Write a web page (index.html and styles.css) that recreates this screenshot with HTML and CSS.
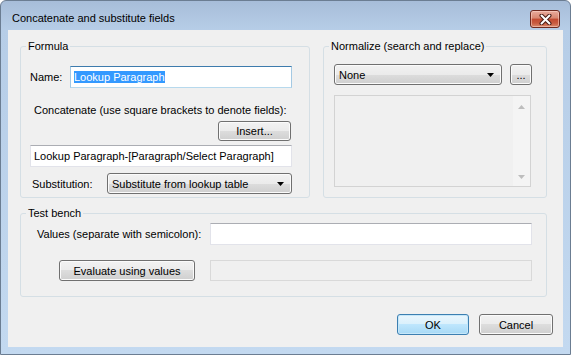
FILE: index.html
```html
<!DOCTYPE html>
<html lang="en">
<head>
    <meta charset="UTF-8">
    <title>Concatenate and substitute fields</title>
    <link rel="stylesheet" href="styles.css">
</head>
<body>
    <div class="window">
        <div class="titlebar">
            <span class="title">Concatenate and substitute fields</span>
            <div class="close-btn">
                <svg width="13" height="11" viewBox="0 0 13 11">
                    <path d="M2.5 1.5 L10.5 9.5 M10.5 1.5 L2.5 9.5" stroke="#4a1c16" stroke-width="4" stroke-linecap="round"/>
                    <path d="M2.5 1.5 L10.5 9.5 M10.5 1.5 L2.5 9.5" stroke="#ffffff" stroke-width="2" stroke-linecap="round"/>
                </svg>
            </div>
        </div>

        <div class="client">
            <div class="top-row">
                <!-- Formula -->
                <fieldset class="group formula">
                    <legend>Formula</legend>
                    <div class="group-body">
                        <div class="name-row">
                            <label class="name-label">Name:</label>
                            <div class="textbox focused"><span class="selected">Lookup Paragraph</span></div>
                        </div>
                        <div class="concat-label">Concatenate (use square brackets to denote fields):</div>
                        <div class="insert-row">
                            <button class="btn insert-btn">Insert...</button>
                        </div>
                        <div class="textbox concat-box">Lookup Paragraph-[Paragraph/Select Paragraph]</div>
                        <div class="subst-row">
                            <label class="subst-label">Substitution:</label>
                            <div class="combo subst-combo">
                                <span>Substitute from lookup table</span>
                                <svg class="arrow" width="7" height="4" viewBox="0 0 7 4"><path d="M0 0 H7 L3.5 4 Z" fill="#000"/></svg>
                            </div>
                        </div>
                    </div>
                </fieldset>

                <!-- Normalize -->
                <fieldset class="group normalize">
                    <legend>Normalize (search and replace)</legend>
                    <div class="group-body">
                        <div class="norm-row">
                            <div class="combo norm-combo">
                                <span>None</span>
                                <svg class="arrow" width="7" height="4" viewBox="0 0 7 4"><path d="M0 0 H7 L3.5 4 Z" fill="#000"/></svg>
                            </div>
                            <button class="btn dots-btn">...</button>
                        </div>
                        <div class="listbox">
                            <div class="scrollbar">
                                <svg width="7" height="4" viewBox="0 0 7 4"><path d="M0 4 H7 L3.5 0 Z" fill="#bdbdbd"/></svg>
                                <svg width="7" height="4" viewBox="0 0 7 4"><path d="M0 0 H7 L3.5 4 Z" fill="#bdbdbd"/></svg>
                            </div>
                        </div>
                    </div>
                </fieldset>
            </div>

            <!-- Test bench -->
            <fieldset class="group testbench">
                <legend>Test bench</legend>
                <div class="group-body">
                    <div class="values-row">
                        <label class="values-label">Values (separate with semicolon):</label>
                        <div class="textbox values-box"></div>
                    </div>
                    <div class="eval-row">
                        <button class="btn eval-btn">Evaluate using values</button>
                        <div class="textbox disabled result-box"></div>
                    </div>
                </div>
            </fieldset>

            <div class="footer">
                <button class="btn default ok-btn">OK</button>
                <button class="btn cancel-btn">Cancel</button>
            </div>
        </div>
    </div>
</body>
</html>
```

FILE: styles.css
```css
* {
    box-sizing: border-box;
}
body {
    margin: 0;
    background: #fff;
    font-family: "Liberation Sans", Arial, sans-serif;
    font-size: 11px;
    color: #000;
}
.window {
    width: 571px;
    height: 355px;
    border: 1px solid #6b7d92;
    border-radius: 6px 6px 0 0;
    background: linear-gradient(#a7bdd9 0px, #b6cde7 28px, #c3d9f0 100%);
}
.titlebar {
    height: 29px;
    display: flex;
    justify-content: space-between;
    align-items: flex-start;
}
.title {
    padding: 11px 0 0 11px;
    line-height: 13px;
}
.close-btn {
    width: 30px;
    height: 18px;
    margin: 9px 10px 0 0;
    border: 1px solid #6e2a20;
    border-radius: 3px;
    background: linear-gradient(#e9ab9d 0%, #d88670 45%, #c24a31 50%, #c85a3f 75%, #d98a6e 100%);
    box-shadow: inset 0 0 0 1px rgba(255, 220, 210, 0.5);
    display: flex;
    align-items: center;
    justify-content: center;
}
.client {
    height: 317px;
    margin: 0 7px;
    padding: 9px 10px 0 12px;
    background: #f0f0f0;
}
.top-row {
    display: flex;
    gap: 13px;
    margin-right: 6px;
}
.group {
    margin: 0;
    padding: 0;
    min-width: 0;
    border: 1px solid #d5dfe5;
    border-radius: 3px;
}
.group legend {
    margin-left: 5px;
    padding: 0 2px;
    line-height: 14px;
}
.formula {
    width: 290px;
}
.formula .group-body {
    padding: 0 17px 3px 9px;
}
.normalize {
    width: 224px;
}
.normalize .group-body {
    padding-left: 10px;
}
.textbox {
    height: 22px;
    padding-left: 3px;
    background: #fff;
    border: 1px solid #e2e3ea;
    border-top-color: #abadb3;
    line-height: 20px;
    white-space: nowrap;
    overflow: hidden;
}
.textbox.focused {
    border-color: #a4c9e3;
    border-top-color: #3d7bad;
    border-bottom-color: #b7d9ed;
}
.textbox.disabled {
    background: #f0f0f0;
    border-color: #d9d9d9;
}
.selected {
    background: #3399ff;
    color: #fff;
}
.btn {
    padding: 0;
    font-family: inherit;
    font-size: 11px;
    color: #000;
    border: 1px solid #707070;
    border-radius: 3px;
    background: linear-gradient(#f2f2f2 0%, #ebebeb 50%, #dddddd 50%, #cfcfcf 100%);
    box-shadow: inset 0 0 0 1px #fbfbfb;
}
.btn.default {
    border-color: #3c7fb1;
    background: linear-gradient(#eaf6fd 0%, #d9f0fc 50%, #bee6fd 50%, #a7d9f5 100%);
    box-shadow: inset 0 0 0 1px #c6e7f9;
}
.combo {
    height: 21px;
    display: flex;
    align-items: center;
    justify-content: space-between;
    padding: 0 7px 0 4px;
    border: 1px solid #707070;
    border-radius: 3px;
    background: linear-gradient(#f2f2f2 0%, #ebebeb 50%, #dddddd 50%, #cfcfcf 100%);
    box-shadow: inset 0 0 0 1px #fbfbfb;
}

/* Formula */
.name-row {
    display: flex;
    align-items: center;
    margin-top: 13px;
}
.name-label {
    width: 40px;
}
.name-row .textbox {
    flex: 1;
}
.concat-label {
    margin-top: 15px;
    padding-left: 4px;
    line-height: 14px;
}
.insert-row {
    display: flex;
    justify-content: flex-end;
    margin-top: 4px;
}
.insert-btn {
    width: 73px;
    height: 20px;
    margin-right: 1px;
}
.concat-box {
    margin-top: 4px;
}
.subst-row {
    display: flex;
    align-items: center;
    margin-top: 6px;
}
.subst-label {
    width: 77px;
    padding-left: 2px;
}
.subst-combo {
    flex: 1;
}

/* Normalize */
.norm-row {
    display: flex;
    align-items: center;
    gap: 8px;
    margin-top: 11px;
}
.norm-combo {
    width: 168px;
}
.dots-btn {
    width: 22px;
    height: 21px;
    line-height: 14px;
}
.listbox {
    width: 197px;
    height: 92px;
    margin-top: 10px;
    border: 1px solid #d3d3d3;
    display: flex;
    justify-content: flex-end;
}
.scrollbar {
    width: 17px;
    background: #f4f4f4;
    display: flex;
    flex-direction: column;
    justify-content: space-between;
    align-items: center;
    padding: 9px 0 7px;
}

/* Test bench */
.testbench {
    margin-top: 8px;
    margin-right: 6px;
}
.testbench .group-body {
    padding: 0 0 15px 16px;
}
.values-row {
    display: flex;
    align-items: center;
    margin-top: 3px;
}
.values-label {
    width: 173px;
}
.values-box {
    width: 322px;
}
.eval-row {
    display: flex;
    align-items: center;
    margin-top: 15px;
}
.eval-btn {
    width: 136px;
    height: 21px;
    margin-left: 22px;
    margin-right: 15px;
}
.result-box {
    width: 322px;
    height: 21px;
}

/* Footer */
.footer {
    display: flex;
    justify-content: flex-end;
    gap: 10px;
    margin-top: 17px;
}
.ok-btn {
    width: 72px;
    height: 21px;
}
.cancel-btn {
    width: 74px;
    height: 21px;
}
```
